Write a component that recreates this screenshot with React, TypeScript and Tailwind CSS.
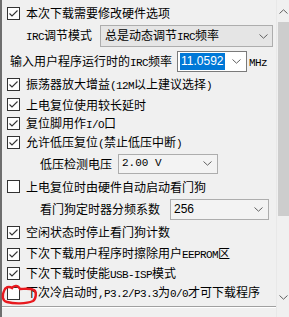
import React from "react";

const CJK = "font-['Noto_Sans_CJK_SC',sans-serif]";

/** half-width latin run, SimSun-like fixed pitch */
const A: React.FC<{ children: React.ReactNode }> = ({ children }) => (
  <span className="font-['Liberation_Mono',monospace] text-[11px] tracking-[-0.6px]">{children}</span>
);

const Check: React.FC<{ checked?: boolean }> = ({ checked }) => (
  <svg width="13" height="13" viewBox="0 0 13 13" className="shrink-0">
    <rect x="0.5" y="0.5" width="12" height="12" fill="#fff" stroke="#333" />
    {checked && (
      <path d="M2.5 6.5 L5 9 L10.5 3.5" fill="none" stroke="#333" strokeWidth="1.1" />
    )}
  </svg>
);

const Chevron: React.FC<{ up?: boolean; color?: string }> = ({ up, color = "#606060" }) => (
  <svg width="9" height="5" viewBox="0 0 9 5">
    <path
      d={up ? "M0.5 4.5 L4.5 0.8 L8.5 4.5" : "M0.5 0.5 L4.5 4.2 L8.5 0.5"}
      fill="none"
      stroke={color}
      strokeWidth="1"
    />
  </svg>
);

const Row: React.FC<{ h: string; checked?: boolean; children: React.ReactNode }> = ({
  h,
  checked,
  children,
}) => (
  <div className={`flex items-center gap-[6px] pl-[5px] ${h}`}>
    <Check checked={checked} />
    <span className="whitespace-nowrap">{children}</span>
  </div>
);

export default function App() {
  return (
    <div
      className={`relative w-[289px] h-[317px] bg-[#f0f0f0] flex overflow-hidden text-[12px] leading-none text-black ${CJK}`}
    >
      {/* option list */}
      <div className="w-[276px] flex flex-col border-l-2 border-[#6e6e6e]">
        <div className="h-[306px] flex flex-col pt-[3px]">
          <Row h="h-[20px]" checked>
            本次下载需要修改硬件选项
          </Row>

          {/* IRC mode */}
          <div className="h-[26px] flex items-center pl-[24px]">
            <span className="w-[73px] whitespace-nowrap">
              <A>IRC</A>调节模式
            </span>
            <div className="ml-[1px] w-[173px] h-[22px] flex items-center justify-between px-[4px] bg-[#e5e5e5] border border-[#adadad]">
              <span className="whitespace-nowrap">
                总是动态调节<A>IRC</A>频率
              </span>
              <Chevron />
            </div>
          </div>

          {/* IRC frequency */}
          <div className="h-[25px] flex items-center pl-[8px]">
            <span className="w-[167px] whitespace-nowrap">
              输入用户程序运行时的<A>IRC</A>频率
            </span>
            <div className="w-[70px] h-[21px] flex items-center justify-between pl-[2px] pr-[5px] bg-white border border-[#7a7a7a]">
              <span className="bg-[#0078d7] text-white px-[1px] py-[1px] font-['Liberation_Sans',sans-serif] text-[12px] leading-[15px]">
                11.0592
              </span>
              <Chevron />
            </div>
            <span className="ml-[2px]">
              <A>MHz</A>
            </span>
          </div>

          <Row h="h-[21px]" checked>
            振荡器放大增益<A>(12M</A>以上建议选择<A>)</A>
          </Row>
          <Row h="h-[19px]" checked>
            上电复位使用较长延时
          </Row>
          <Row h="h-[19px]" checked>
            复位脚用作<A>I/O</A>口
          </Row>
          <Row h="h-[19px]" checked>
            允许低压复位<A>(</A>禁止低压中断<A>)</A>
          </Row>

          {/* low voltage */}
          <div className="h-[23px] flex items-center pl-[38px]">
            <span className="w-[78px] whitespace-nowrap">低压检测电压</span>
            <div className="w-[100px] h-[20px] flex items-center justify-between pl-[3px] pr-[5px] bg-[#f3f3f3] border border-[#adadad]">
              <span className="font-['Liberation_Mono',monospace] text-[11px]">2.00 V</span>
              <Chevron />
            </div>
          </div>

          <Row h="h-[23px]">上电复位时由硬件自动启动看门狗</Row>

          {/* watchdog prescaler */}
          <div className="h-[22px] flex items-center pl-[38px]">
            <span className="w-[130px] whitespace-nowrap">看门狗定时器分频系数</span>
            <div className="w-[99px] h-[21px] flex items-center justify-between pl-[3px] pr-[5px] bg-[#f3f3f3] border border-[#adadad]">
              <span className="font-['Liberation_Sans',sans-serif] text-[12px]">256</span>
              <Chevron />
            </div>
          </div>

          <Row h="h-[24px]" checked>
            空闲状态时停止看门狗计数
          </Row>
          <Row h="h-[20px]" checked>
            下次下载用户程序时擦除用户<A>EEPROM</A>区
          </Row>
          <Row h="h-[19px]" checked>
            下次下载时使能<A>USB-ISP</A>模式
          </Row>
          <Row h="h-[20px]">
            下次冷启动时<A>,P3.2/P3.3</A>为<A>0/0</A>才可下载程序
          </Row>
        </div>
        <div className="h-[1px] bg-[#a0a0a0]" />
        <div className="h-[1px] bg-white" />
        <div className="flex-1" />
      </div>

      {/* vertical scrollbar */}
      <div className="w-[13px] flex flex-col items-center border-l border-[#e8e8e8]">
        <div className="h-[22px] flex items-center justify-center">
          <Chevron up />
        </div>
        <div className="w-[11px] h-[194px] bg-[#cdcdcd]" />
        <div className="flex-1" />
        <div className="h-[30px] flex items-start justify-center pt-[8px]">
          <Chevron />
        </div>
      </div>

      {/* red annotation circle */}
      <svg
        className="absolute left-0 top-[283px] pointer-events-none"
        width="40"
        height="24"
        viewBox="0 0 40 24"
      >
        <path
          d="M4 8 C5 4 9 3 12 5 C14 2 18 2 20 6 C24 6 30 5 34 7 C37 9 36 16 33 18 C26 21 14 21 7 19 C2 18 2 12 4 8 Z"
          fill="none"
          stroke="#e8191e"
          strokeWidth="2.4"
        />
      </svg>
    </div>
  );
}
